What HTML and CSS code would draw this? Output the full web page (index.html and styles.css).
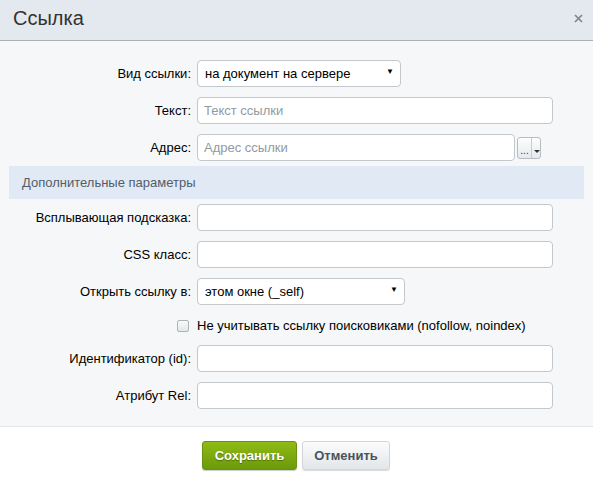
FILE: index.html
```html
<!DOCTYPE html>
<html lang="ru">
<head>
<meta charset="utf-8">
<link rel="stylesheet" href="styles.css">
</head>
<body>
<div class="dialog">
  <div class="head">
    <div class="title">Ссылка</div>
    <svg class="close" width="9" height="9" viewBox="0 0 9 9"><path d="M1 1L8 8M8 1L1 8" stroke="#7d8793" stroke-width="1.7" fill="none"/></svg>
  </div>
  <div class="body">
    <div class="row">
      <label class="lbl">Вид ссылки:</label>
      <div class="select sel1"><span>на документ на сервере</span><span class="arrow">▼</span></div>
    </div>
    <div class="row">
      <label class="lbl">Текст:</label>
      <div class="input ph">Текст ссылки</div>
    </div>
    <div class="row">
      <label class="lbl">Адрес:</label>
      <div class="input ph addr">Адрес ссылки</div>
      <div class="dots"><span class="dd">...</span><span class="dsep"></span><span class="darr"></span></div>
    </div>
    <div class="section">Дополнительные параметры</div>
    <div class="row">
      <label class="lbl">Всплывающая подсказка:</label>
      <div class="input"></div>
    </div>
    <div class="row">
      <label class="lbl">CSS класс:</label>
      <div class="input"></div>
    </div>
    <div class="row">
      <label class="lbl">Открыть ссылку в:</label>
      <div class="select sel2"><span>этом окне (_self)</span><span class="arrow">▼</span></div>
    </div>
    <div class="row checkrow">
      <span class="lbl"><span class="cb"></span></span>
      <span class="cbtext">Не учитывать ссылку поисковиками (nofollow, noindex)</span>
    </div>
    <div class="row">
      <label class="lbl">Идентификатор (id):</label>
      <div class="input"></div>
    </div>
    <div class="row">
      <label class="lbl">Атрибут Rel:</label>
      <div class="input"></div>
    </div>
  </div>
  <div class="foot">
    <div class="btn save">Сохранить</div>
    <div class="btn cancel">Отменить</div>
  </div>
</div>
</body>
</html>
```
FILE: styles.css
```css
html, body { margin: 0; padding: 0; }
body {
  width: 593px; height: 478px; overflow: hidden;
  font-family: "Liberation Sans", Arial, sans-serif;
  font-size: 13px; color: #000;
  background: #fff;
}
.dialog { display: flex; flex-direction: column; height: 478px; }
.head {
  height: 41px; box-sizing: border-box;
  background: #e3e9ee;
  border-bottom: 1px solid #a9b0b6;
  display: flex; align-items: center; justify-content: space-between;
  padding: 0 10px 0 13px;
}
.title { font-size: 20px; color: #333; padding-bottom: 3px; }
.close { margin-bottom: 3px; }
.body {
  background: #f5f7f8;
  padding: 19px 9px 0 9px;
  height: 385px; box-sizing: border-box;
  display: flex; flex-direction: column;
}
.row { display: flex; align-items: center; height: 27px; margin-bottom: 10px; }
.lbl { width: 188px; text-align: right; padding-right: 6px; box-sizing: border-box; color: #000; }
.input, .select {
  height: 27px; box-sizing: border-box;
  background: #fff; border: 1px solid #c3c8cc; border-radius: 4px;
  display: flex; align-items: center; padding: 0 6px;
}
.input { width: 356px; }
.addr { width: 318px; }
.ph { color: #909aa3; }
.select { justify-content: space-between; padding: 0 6px 0 7px; color: #000; }
.sel1 { width: 204px; }
.sel2 { width: 208px; }
.arrow { font-size: 8px; color: #000; margin-top: -4px; }
.dots {
  width: 24px; height: 22px; box-sizing: border-box; margin-left: 2px;
  border: 1px solid #b5bcc2; border-radius: 3px;
  background: linear-gradient(#fdfdfd, #e6eaec);
  display: flex; align-items: flex-end;
}
.dd { font-size: 10px; line-height: 10px; color: #333; width: 13px; text-align: center; padding-bottom: 2px; }
.dsep { width: 1px; height: 100%; background: #c7ccd0; }
.darr {
  width: 0; height: 0; border-left: 3px solid transparent; border-right: 3px solid transparent;
  border-top: 3px solid #333; margin: 0 0 5px 2px;
}
.section {
  height: 33px; background: #e1eaf4; margin: -5px 0 5px 0;
  display: flex; align-items: center; padding-left: 13px; color: #535c69;
  padding-bottom: 1px; box-sizing: border-box;
}
.checkrow { height: 13px; margin-top: 4px; margin-bottom: 13px; }
.checkrow .lbl { display: flex; justify-content: flex-end; padding-right: 8px; }
.cb {
  width: 12px; height: 12px; border: 1px solid #aeb3b8; border-radius: 2px;
  background: linear-gradient(#fafafa, #e4e6e8); box-sizing: border-box;
}
.cbtext { color: #000; }
.foot {
  flex: 1; background: #fff; border-top: 1px solid #e2e6ea;
  display: flex; justify-content: center; align-items: flex-start;
  padding-top: 14px; gap: 5px; padding-right: 1px;
}
.btn {
  height: 29px; box-sizing: border-box; border-radius: 3px;
  display: flex; align-items: center; justify-content: center;
  font-weight: bold; font-size: 13px;
}
.save {
  width: 95px; color: #fff;
  background: linear-gradient(#8fba16, #6c9a0a);
  border: 1px solid #6a9212;
  text-shadow: 0 1px 1px rgba(0,0,0,0.35);
  box-shadow: 0 1px 1px rgba(0,0,0,0.2);
}
.cancel {
  width: 88px; color: #4a535c;
  background: linear-gradient(#fbfcfc, #e2e6e9);
  border: 1px solid #d2d6d9;
  box-shadow: 0 1px 1px rgba(0,0,0,0.15);
}
```
